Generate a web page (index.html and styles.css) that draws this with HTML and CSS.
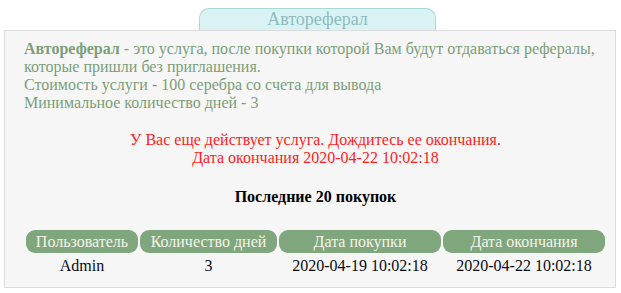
FILE: index.html
```html
<!DOCTYPE html>
<html lang="ru">
<head>
  <meta charset="UTF-8">
  <title>Автореферал</title>
  <link rel="stylesheet" href="styles.css">
</head>
<body>
  <div id="wrap">
    <div class="tab">Автореферал</div>
    <div class="panel">
      <div class="info">
        <b>Автореферал</b> - это услуга, после покупки которой Вам будут отдаваться рефералы, которые пришли без приглашения.<br>
        Стоимость услуги - 100 серебра со счета для вывода<br>
        Минимальное количество дней - 3
      </div>
      <div class="notice">
        У Вас еще действует услуга. Дождитесь ее окончания.<br>
        Дата окончания 2020-04-22 10:02:18
      </div>
      <div class="title">Последние 20 покупок</div>
      <table class="history">
        <colgroup>
          <col class="c-user">
          <col class="c-days">
          <col class="c-date">
          <col class="c-date">
        </colgroup>
        <tr>
          <th>Пользователь</th>
          <th>Количество дней</th>
          <th>Дата покупки</th>
          <th>Дата окончания</th>
        </tr>
        <tr>
          <td>Admin</td>
          <td>3</td>
          <td>2020-04-19 10:02:18</td>
          <td>2020-04-22 10:02:18</td>
        </tr>
      </table>
    </div>
  </div>
</body>
</html>
```

FILE: styles.css
```css
body {
  margin: 0;
  background: #fff;
  font-family: "Liberation Serif", "Times New Roman", serif;
  font-size: 16px;
}

#wrap {
  padding: 8px 5px 0 4px;
}

.tab {
  width: 235px;
  height: 21px;
  margin-left: 195px;
  border: 1px solid #a9d8d6;
  border-bottom: none;
  border-radius: 10px 10px 0 0;
  background: #d9f3f4;
  color: #8fbbbf;
  font-size: 18px;
  line-height: 21px;
  text-align: center;
}

.panel {
  border: 1px solid #dcdcdc;
  background: #f6f6f6;
  padding: 9px 8px 9px 19px;
}

.info {
  color: #7b9e79;
  line-height: 18px;
}

.notice {
  margin-top: 19px;
  color: #ff1c1c;
  line-height: 18px;
  text-align: center;
}

.title {
  margin-top: 21px;
  font-weight: bold;
  text-align: center;
  color: #000;
}

.history {
  width: 100%;
  margin-top: 22px;
  table-layout: fixed;
  border-spacing: 2px;
}

.c-user { width: 112px; }
.c-days { width: 137px; }
.c-date { width: 162px; }

.history th {
  background: #80a67e;
  color: #f4f4e8;
  font-weight: normal;
  padding: 3px 0 2px;
  border-radius: 9px;
  white-space: nowrap;
}

.history td {
  padding: 2px 0 1px;
  text-align: center;
  color: #0a0a14;
  white-space: nowrap;
}
```
